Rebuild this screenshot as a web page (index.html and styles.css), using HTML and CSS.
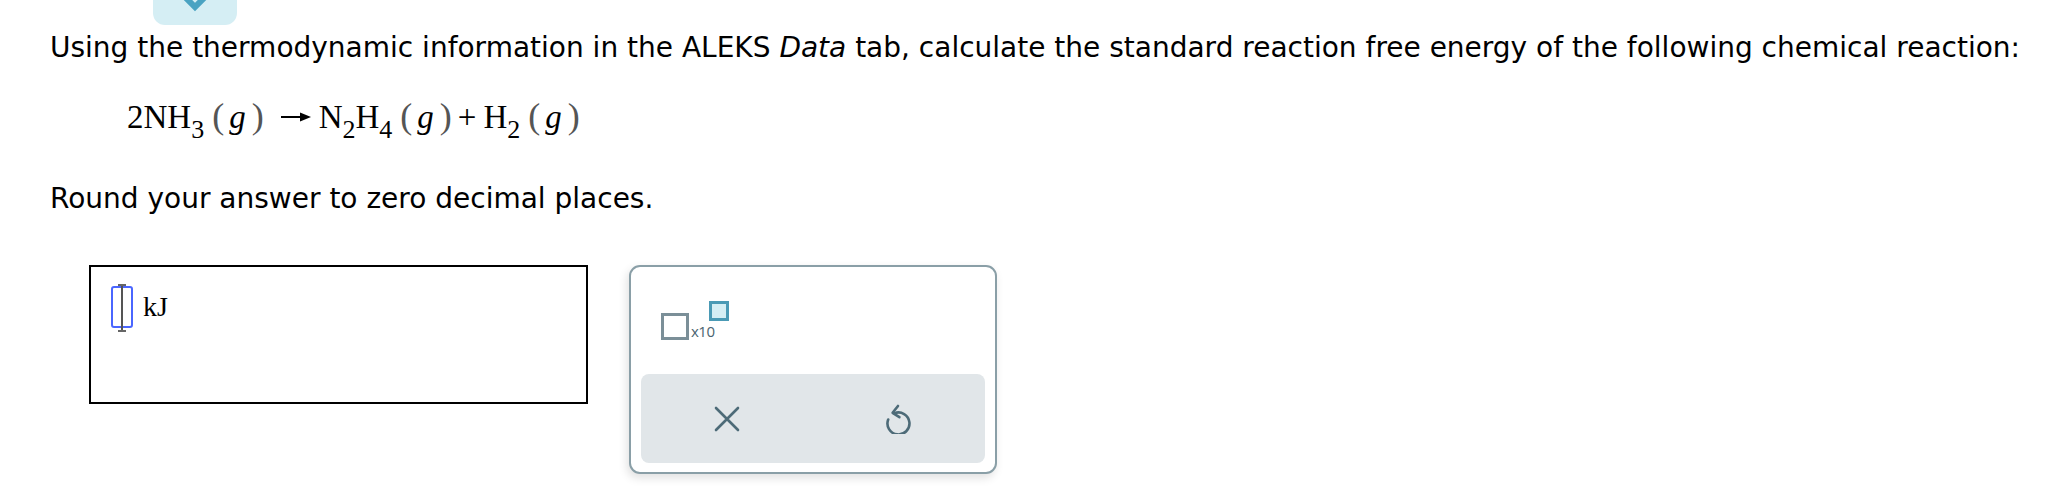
FILE: index.html
```html
<!DOCTYPE html>
<html>
<head>
<meta charset="utf-8">
<link rel="stylesheet" href="styles.css">
</head>
<body>
<div class="page">
  <div class="tab">
    <svg class="chev" width="30" height="14" viewBox="0 0 30 14"><path d="M4 -4 L15 7 L26 -4" fill="none" stroke="#4aa3c2" stroke-width="6" stroke-linejoin="miter"/></svg>
  </div>
  <p class="q first">Using the thermodynamic information in the ALEKS <i>Data</i> tab, calculate the standard reaction free energy of the following chemical reaction:</p>
  <div class="eq">
    <span class="sp">2NH<sub>3</sub></span><span class="ph"><span class="par">(</span><i>g</i><span class="par">)</span></span><span class="arrow"><svg width="32" height="12" viewBox="0 0 32 12"><path d="M1 6 H22" stroke="#000" stroke-width="2"/><path d="M20 1.5 L31 6 L20 10.5 Z" fill="#000"/></svg></span><span class="sp">N<sub>2</sub>H<sub>4</sub></span><span class="ph"><span class="par">(</span><i>g</i><span class="par">)</span></span><span class="plus">+</span><span class="sp">H<sub>2</sub></span><span class="ph"><span class="par">(</span><i>g</i><span class="par">)</span></span>
  </div>
  <p class="q second">Round your answer to zero decimal places.</p>
  <div class="answer-row">
    <div class="answer-box">
      <span class="cursor"><span class="ibeam"></span></span>
      <span class="unit">kJ</span>
    </div>
    <div class="tools">
      <div class="tool-top">
        <div class="sci">
          <span class="sci-box"></span>
          <span class="sci-x">x10</span>
          <span class="sci-exp"></span>
        </div>
      </div>
      <div class="tool-bar">
        <button class="tbtn" aria-label="clear">
          <svg width="26" height="26" viewBox="0 0 26 26"><path d="M2 2 L24 24 M24 2 L2 24" stroke="#4d6b78" stroke-width="2.6" stroke-linecap="round"/></svg>
        </button>
        <button class="tbtn" aria-label="undo">
          <svg width="28" height="30" viewBox="0 0 28 30"><path d="M9.5 9.2 A11 11 0 1 1 3.2 15.5" fill="none" stroke="#4d6b78" stroke-width="2.6" stroke-linecap="round"/><path d="M13 2 L7.6 8.8 L14.4 13.2" fill="none" stroke="#4d6b78" stroke-width="2.6" stroke-linecap="round" stroke-linejoin="round"/></svg>
        </button>
      </div>
    </div>
  </div>
</div>
</body>
</html>
```
FILE: styles.css
```css
html, body { margin: 0; padding: 0; background: #fff; }
body { width: 2050px; height: 496px; overflow: hidden; }
.page { padding-left: 50px; font-family: "DejaVu Sans", Verdana, sans-serif; color: #000; }
.tab {
  margin-left: 103px;
  width: 84px; height: 25px;
  background: #d5eef4;
  border-radius: 0 0 12px 12px;
  display: flex; justify-content: center; align-items: flex-start;
}
.chev { display: block; }
.q { margin: 0; font-size: 28px; line-height: 36px; }
.first { margin-top: 5px; }
.eq {
  margin-top: 30px; margin-left: 77px;
  font-family: "Liberation Serif", "Times New Roman", serif;
  font-size: 33px; line-height: 40px;
  display: flex; align-items: baseline;
}
.eq sub { font-size: 26px; vertical-align: -10px; line-height: 0; }
.eq .ph { margin-left: 8px; }
.eq .par { color: #555; font-size: 36px; }
.eq .ph i { padding: 0 6px 0 5px; font-family: "Liberation Serif", "Times New Roman", serif; }
.arrow { margin: 0 7px 0 16px; display: inline-flex; align-self: center; position: relative; top: 0px; }
.plus { margin: 0 7px 0 6px; }
.second { margin-top: 44px; }
.answer-row { display: flex; margin-top: 48px; margin-left: 39px; gap: 41px; align-items: flex-start; }
.answer-box {
  border: 2px solid #000;
  display: flex; align-items: flex-start;
  padding: 19px 0 0 20px; box-sizing: border-box; height: 139px; width: 499px;
}
.cursor {
  width: 22px; height: 42px; box-sizing: border-box;
  border: 2px solid #4a66ff; border-radius: 3px;
  position: relative; display: block;
}
.ibeam {
  position: absolute; left: 8px; top: -4px;
  width: 2px; height: 48px; background: #555;
}
.ibeam::before, .ibeam::after {
  content: ""; position: absolute; left: -3px; width: 8px; height: 2px; background: #666;
}
.ibeam::before { top: 0; }
.ibeam::after { bottom: 0; }
.unit {
  font-family: "Liberation Serif", "Times New Roman", serif;
  font-size: 28px; line-height: 42px; margin-left: 10px;
}
.tools {
  width: 368px; height: 209px; box-sizing: border-box;
  border: 2px solid #8a9fa7; border-radius: 11px;
  background: #fff;
  box-shadow: -2px 4px 10px rgba(0,0,0,0.12);
  display: flex; flex-direction: column;
  padding: 0 10px 9px 10px;
}
.tool-top { flex: 1; padding: 34px 0 0 20px; }
.sci { position: relative; width: 80px; height: 40px; }
.sci-box {
  position: absolute; left: 0; top: 12px;
  width: 28px; height: 27px; box-sizing: border-box;
  border: 3px solid #7b8f98;
}
.sci-x {
  position: absolute; left: 30px; top: 21px;
  font-family: "Open Sans", "DejaVu Sans", sans-serif; font-size: 15px; line-height: 18px;
  color: #4a6470; letter-spacing: -0.5px;
}
.sci-exp {
  position: absolute; left: 48px; top: 0;
  width: 20px; height: 20px; box-sizing: border-box;
  border: 3px solid #4a9ab5; background: #d5eef4;
}
.tool-bar {
  height: 89px; background: #e1e6e9; border-radius: 8px;
  display: flex; align-items: center;
}
.tbtn {
  flex: 1; height: 100%; background: transparent; border: 0; padding: 0;
  display: flex; align-items: center; justify-content: center;
}
.tbtn svg { display: block; }
```
